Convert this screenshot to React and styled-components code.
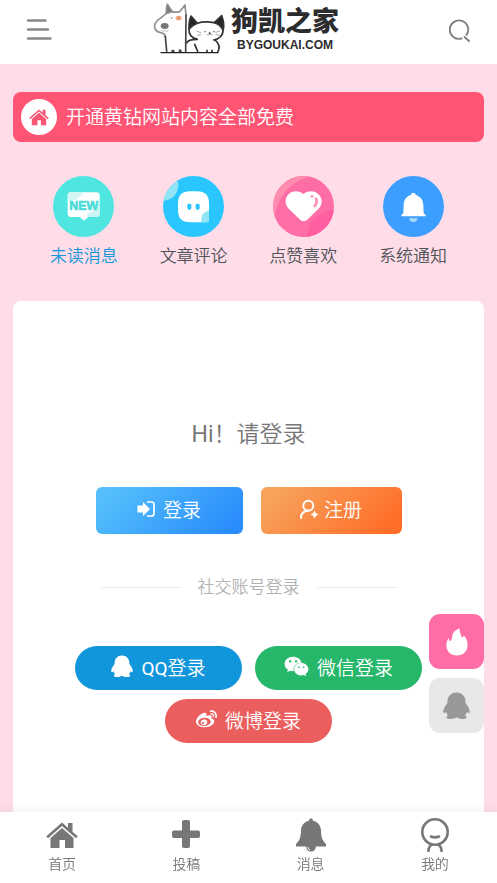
import React from "react";
import styled, { createGlobalStyle } from "styled-components";
import { FaWeibo, FaWeixin } from "react-icons/fa";

const MenuIcon = () => (
	<svg width='30' height='24' viewBox='-2 1 30 24' stroke='#888888' strokeWidth='2.4' strokeLinecap='round'>
		<path d='M4 3.5H21.500M4 12.500H24M4 21.500H26.500' />
	</svg>
);

const SearchIcon = () => (
	<svg width='22' height='24' viewBox='-1 -2 22 24' fill='none' stroke='#808080' strokeWidth='1.9' strokeLinecap='round'>
		<path d='M12.500 18.500A9.200 9.200 0 1 1 17.500 15M15.500 17L20 21' />
	</svg>
);

const LogoPets = () => (
	<svg width='72' height='52' viewBox='10 5 216 156' fill='none' strokeLinecap='round' strokeLinejoin='round'>
		{/* 강아지 */}
		<g stroke='#909090' strokeWidth='5'>
			<path d='M50 39C50 26 51 17 53 12L68 34Z' fill='#777777' />
			<path d='M50 39C42 49 19 57 15 74C13 86 21 94 33 97C43 99 47 104 47 110' />
			<path d='M68 34C78 37 83 36 90 34L106 14L109 44' />
		</g>
		<path d='M109 44L108 154M47 108L51 153M67 154C67 149 71 148 73 154M89 154C89 148 93 148 94 154' stroke='#444444' strokeWidth='5' />
		<ellipse cx='45' cy='77' rx='12' ry='9' fill='#777777' />
		<path d='M36 91Q43 98 45 89Q51 98 56 89' stroke='#999999' strokeWidth='2' />
		<circle cx='66' cy='53' r='2' fill='#555555' />
		<ellipse cx='87' cy='53' rx='7' ry='5' stroke='#f3a070' strokeWidth='4' />
		<circle cx='87' cy='53' r='3' fill='#c06030' />
		{/* 고양이 */}
		<g stroke='#333333' strokeWidth='5'>
			<path d='M118 86C117 67 121 54 124 47L143 69C133 73 124 79 118 86Z' fill='#262626' />
			<path d='M194 67L216 46C222 62 224 78 220 89C213 76 206 70 194 67Z' fill='#262626' />
			<path d='M143 69C158 64 177 64 194 67' />
			<path d='M118 86C117 103 127 113 142 117M220 89C221 105 208 117 192 119M143 117C127 117 114 120 111 128M135 132L144 153M197 120C210 130 211 142 204 156' />
			<path d='M172 155V150M187 155V150' />
		</g>
		<path d='M34 157H204' stroke='#222222' strokeWidth='4' />
		<path d='M142 93L153 97M144 105L153 103M210 92L199 96M211 105L199 103M172 103Q177 107 180 101Q184 107 188 103' stroke='#777777' strokeWidth='2' />
		<g fill='#333333'>
			<circle cx='166' cy='94' r='2' />
			<circle cx='193' cy='94' r='2' />
			<circle cx='180' cy='99' r='3' />
		</g>
	</svg>
);

const HomeIcon = ({ width, height }) => (
	<svg width={width} height={height} viewBox='0 0 32 27' fill='currentColor'>
		<path d='M16 0.500L22 5.800V1H26.500V9.800L31.700 14.300L30 16.200L16 4L2 16.200L0.300 14.300Z' />
		<path d='M16 6L27.500 16V26H19V18H13.500V26H4.500V16Z' />
	</svg>
);

const NewIcon = () => (
	<svg width='61' height='61' viewBox='0 0 183 183'>
		<circle cx='91.500' cy='91.500' r='91.500' fill='#4fe5e1' />
		<path d='M53 49H131Q140 49 140 58V114Q140 123 131 123H106L93 134L80 123H53Q44 123 44 114V58Q44 49 53 49Z' fill='#ffffff' />
		<path d='M53 49H94C84 56 80 69 65 73Q53 76 44 76V58Q44 49 53 49Z' fill='#d3f6f5' />
		<path d='M140 82V114Q140 123 131 123H103C101 107 124 108 125 98C127 90 132 85 140 82Z' fill='#c8f5f3' />
		<text x='92' y='102' textAnchor='middle' fontFamily='Liberation Sans, sans-serif' fontWeight='700' fontSize='37' fill='#4bdcd9' stroke='#4bdcd9' strokeWidth='2' strokeLinejoin='round'>NEW</text>
	</svg>
);

const CommentIcon = () => (
	<svg width='61' height='61' viewBox='0 0 183 183'>
		<clipPath id='commentClip'>
			<circle cx='91.500' cy='91.500' r='91.500' />
		</clipPath>
		<circle cx='91.500' cy='91.500' r='91.500' fill='#29c6ff' />
		<circle cx='0' cy='28' r='46' fill='#90e4f3' clipPath='url(#commentClip)' />
		<path d='M81 46H102Q138 46 138 82V132Q138 139 131 139H81Q45 139 45 103V82Q45 46 81 46Z' fill='#ffffff' />
		<path d='M138 105V132Q138 139 131 139H115C113 119 121 106 138 105Z' fill='#90e4f3' />
		<rect x='73' y='83' width='12' height='18' rx='5' fill='#29c6ff' />
		<rect x='98' y='83' width='12' height='18' rx='5' fill='#29c6ff' />
	</svg>
);

const HeartIcon = () => (
	<svg width='61' height='61' viewBox='0 0 183 183'>
		<clipPath id='heartClip'>
			<circle cx='91.500' cy='91.500' r='91.500' />
		</clipPath>
		<g clipPath='url(#heartClip)'>
			<rect width='183' height='183' fill='#ff6da7' />
			<path d='M0 0H118C65 10 20 50 8 110L0 120Z' fill='#ff8daf' />
			<path d='M183 102C135 108 104 136 102 183H183Z' fill='#ff5fa0' />
		</g>
		<path d='M91 54C77 42 56 43 45 56C34 69 36 87 48 99L82 132Q92 140 102 132L136 99C148 87 150 69 138 56C126 43 106 42 91 54Z' fill='#ffffff' />
		<circle cx='117' cy='61' r='4' fill='#ff8daf' />
		<path d='M129 68Q135 78 125 90' fill='none' stroke='#ff8daf' strokeWidth='8' strokeLinecap='round' />
	</svg>
);

const NoticeIcon = () => (
	<svg width='61' height='61' viewBox='0 0 183 183'>
		<circle cx='91.500' cy='91.500' r='91.500' fill='#3c9eff' />
		<path d='M84 57Q84 50 91 50Q98 50 98 57C113 61 120 72 121 87L122 112L128 117V121H55V117L61 112L62 87C63 72 69 61 84 57Z' fill='#ffffff' />
		<path d='M78 127H104Q102 138 91 138Q80 138 78 127Z' fill='#a9dcf8' />
	</svg>
);

const SignInIcon = () => (
	<svg width='18' height='18' viewBox='0 0 18 18'>
		<path d='M0.500 5.500H6V2L13 9L6 16V12.500H0.500Z' fill='currentColor' />
		<path d='M10 2H14.500Q17 2 17 4.500V13.500Q17 16 14.500 16H10' fill='none' stroke='currentColor' strokeWidth='1.700' />
	</svg>
);

const SignUpIcon = () => (
	<svg width='18' height='20' viewBox='0 0 18 20'>
		<circle cx='8.300' cy='6.700' r='5' fill='none' stroke='currentColor' strokeWidth='1.900' />
		<path d='M1 19C1 15 3.500 12.300 7.500 11.800' fill='none' stroke='currentColor' strokeWidth='2' strokeLinecap='round' />
		<path d='M14.500 12L15.500 14.500L18 15.500L15.500 16.500L14.500 19L13.500 16.500L11 15.500L13.500 14.500Z' fill='currentColor' stroke='currentColor' strokeWidth='0.800' />
	</svg>
);

const PenguinIcon = ({ size }) => (
	<svg width={size} height={size} viewBox='0 0 24 24' fill='currentColor'>
		<path d='M12 0.500C7 0.500 4 4 4 8.700C4 9.500 3.800 10 3.200 10.900C1.600 13 0 15.500 0.300 18C0.500 19.500 1.700 18.800 2.700 17.600C3 19 3.600 20 4.600 20.900C2.500 21.500 2.300 23.800 5.800 23.900C8.500 24 10.500 23.500 12 22.500C13.500 23.500 15.500 24 18.200 23.900C21.700 23.800 21.500 21.500 19.400 20.900C20.400 20 21 19 21.300 17.600C22.300 18.800 23.500 19.500 23.700 18C24 15.500 22.400 13 20.800 10.900C20.200 10 20 9.500 20 8.700C20 4 17 0.500 12 0.500Z' />
	</svg>
);

const FlameIcon = () => (
	<svg width='22' height='28' viewBox='0 0 22 28' fill='currentColor'>
		<path d='M13.300 0.300C14.300 3.500 13.800 5.500 15.600 8.500C16.500 10 17.300 9.500 17.700 7.500C20.500 10 21.700 13.500 21.600 17C21.500 23.500 17 27.500 11 27.500C4.800 27.500 0.400 23.500 0.400 17.500C0.400 14.500 1.300 11.500 2.800 10C3 12.500 3.800 13.500 5 12.500C6.500 11 5.800 8 7 5.500C8.300 3 10.500 2 13.300 0.300Z' />
	</svg>
);

const PlusIcon = () => (
	<svg width='28' height='34' viewBox='0 0 28 34' fill='currentColor'>
		<rect x='10' y='2' width='8' height='28' rx='2' />
		<rect x='0' y='12.500' width='28' height='7.500' rx='2' />
	</svg>
);

const BellIcon = () => (
	<svg width='32' height='34' viewBox='0 0 32 34' fill='currentColor'>
		<path d='M14 2.800Q14 0.300 16 0.300Q18 0.300 18 2.800C23 4 25.500 7.500 26 12C26.200 17 26 21 31 26V28.500H1V26C6 21 5.800 17 6 12C6.500 7.500 9 4 14 2.800Z' />
		<path d='M11 28H21Q20.500 33.500 16 33.500Q11.500 33.500 11 28Z' />
		<path d='M12.800 29Q13.300 31.500 15 31.800' fill='none' stroke='#ffffff' />
	</svg>
);

const MineIcon = () => (
	<svg width='30' height='34' viewBox='0 0 30 34' fill='none' stroke='currentColor' strokeWidth='2.600' strokeLinecap='round'>
		<circle cx='15' cy='14' r='12.700' />
		<path d='M11 18.500Q15 20.300 19 18.500M8.500 33C8.500 30 9.500 28 12 26.700M21.500 33C21.500 30 20.500 28 18 26.700' />
	</svg>
);

const categories = [
	{ name: "未读消息", icon: <NewIcon />, active: true },
	{ name: "文章评论", icon: <CommentIcon /> },
	{ name: "点赞喜欢", icon: <HeartIcon /> },
	{ name: "系统通知", icon: <NoticeIcon /> },
];

const tabs = [
	{ name: "首页", icon: <HomeIcon width='32' height='27' /> },
	{ name: "投稿", icon: <PlusIcon /> },
	{ name: "消息", icon: <BellIcon /> },
	{ name: "我的", icon: <MineIcon /> },
];

const App = () => {
	return (
		<Page>
			<GlobalStyle />
			<Header>
				<IconButton aria-label='菜单'>
					<MenuIcon />
				</IconButton>
				<Logo href='/'>
					<LogoPets />
					<LogoText>
						<LogoName>狗凯之家</LogoName>
						<LogoDomain>BYGOUKAI.COM</LogoDomain>
					</LogoText>
				</Logo>
				<IconButton aria-label='搜索'>
					<SearchIcon />
				</IconButton>
			</Header>
			<Main>
				<Notice href='#vip'>
					<NoticeBadge>
						<HomeIcon width='20' height='17' />
					</NoticeBadge>
					<NoticeText>开通黄钻网站内容全部免费</NoticeText>
				</Notice>
				<CategoryList>
					{categories.map((item) => (
						<CategoryLink key={item.name} href='#message' $active={item.active}>
							{item.icon}
							<span>{item.name}</span>
						</CategoryLink>
					))}
				</CategoryList>
				<Card>
					<Title>
						<Latin>Hi</Latin>！请登录
					</Title>
					<ButtonRow>
						<SignButton $from='#54bffc' $to='#2a8dfc' $width='147px' $gap='8px'>
							<SignInIcon />
							登录
						</SignButton>
						<SignButton $from='#f7a35c' $to='#ff6e28' $width='141px' $gap='6px'>
							<SignUpIcon />
							注册
						</SignButton>
					</ButtonRow>
					<Divider>社交账号登录</Divider>
					<SocialList>
						<SocialButton $color='#1296db'>
							<PenguinIcon size='22' />
							<span>
								<Latin>QQ</Latin>登录
							</span>
						</SocialButton>
						<SocialButton $color='#26b76a'>
							<FaWeixin size='25' />
							微信登录
						</SocialButton>
						<SocialButton $color='#eb5e5e'>
							<FaWeibo size='21' />
							微博登录
						</SocialButton>
					</SocialList>
				</Card>
			</Main>
			<FloatBar>
				<FloatButton aria-label='热门' $color='#ffffff' $background='#ff6da7'>
					<FlameIcon />
				</FloatButton>
				<FloatButton aria-label='QQ' $color='#999798' $background='#e8e8e8'>
					<PenguinIcon size='27' />
				</FloatButton>
			</FloatBar>
			<TabBar>
				{tabs.map((tab) => (
					<TabLink key={tab.name} href='#tab'>
						<TabIcon>{tab.icon}</TabIcon>
						{tab.name}
					</TabLink>
				))}
			</TabBar>
		</Page>
	);
};

export default App;

const GlobalStyle = createGlobalStyle`
	* {
		box-sizing: border-box;
	}
	body {
		margin: 0;
		background: #ffdde8;
		font-family: Roboto, "Noto Sans CJK SC", sans-serif;
		font-weight: 350;
	}
	a {
		color: inherit;
		text-decoration: none;
	}
	button {
		border: 0;
		padding: 0;
		font-family: inherit;
		font-weight: inherit;
		cursor: pointer;
	}
	svg {
		display: block;
		flex-shrink: 0;
	}
`;

const Page = styled.div`
	display: flex;
	flex-direction: column;
	min-height: 100vh;
`;

const Latin = styled.span`
	font-weight: 400;
`;

const Header = styled.header`
	display: grid;
	grid-template-columns: 1fr auto 1fr;
	align-items: center;
	height: 64px;
	padding: 0 27px 0 22px;
	background: #ffffff;
`;

const IconButton = styled.button`
	background: none;
	padding-bottom: 4px;
	&:last-child {
		justify-self: end;
	}
	&:first-child {
		justify-self: start;
	}
`;

const Logo = styled.a`
	display: flex;
	gap: 6px;
	height: 60px;
	color: #2c2c2e;
`;

const LogoText = styled.div`
	display: flex;
	flex-direction: column;
	align-items: center;
	padding-top: 4px;
`;

const LogoName = styled.span`
	font-size: 27px;
	font-weight: 900;
	line-height: 32px;
`;

const LogoDomain = styled.span`
	font-family: "Liberation Sans", sans-serif;
	font-size: 12px;
	font-weight: 700;
	line-height: 14px;
`;

const Main = styled.main`
	flex: 1;
	display: flex;
	flex-direction: column;
	padding: 28px 13px 60px;
`;

const Notice = styled.a`
	display: flex;
	align-items: center;
	gap: 9px;
	height: 50px;
	padding: 0 8px;
	border-radius: 8px;
	background: #ff5474;
	color: #ffffff;
	font-size: 19px;
`;

const NoticeBadge = styled.span`
	display: flex;
	align-items: center;
	justify-content: center;
	width: 36px;
	height: 36px;
	border-radius: 50%;
	background: #ffffff;
	color: #f65574;
`;

const NoticeText = styled.span`
	padding-bottom: 4px;
`;

const CategoryList = styled.nav`
	display: grid;
	grid-template-columns: repeat(4, 1fr);
	margin: 34px 0 35px;
	padding: 0 16px;
`;

const CategoryLink = styled.a`
	display: flex;
	flex-direction: column;
	align-items: center;
	gap: 9px;
	font-size: 17px;
	line-height: 20px;
	color: ${(props) => (props.$active ? "#1296db" : "#4e5358")};
`;

const Card = styled.section`
	flex: 1;
	padding: 119px 20px 80px;
	border-radius: 8px;
	background: #ffffff;
`;

const Title = styled.h1`
	margin: 0 0 37px;
	font-size: 23px;
	font-weight: inherit;
	line-height: 30px;
	text-align: center;
	color: #777777;
`;

const ButtonRow = styled.div`
	display: flex;
	justify-content: center;
	gap: 18px;
`;

const SignButton = styled.button`
	display: flex;
	align-items: center;
	justify-content: center;
	gap: ${(props) => props.$gap};
	width: ${(props) => props.$width};
	height: 47px;
	padding-bottom: 4px;
	border-radius: 6px;
	background: linear-gradient(135deg, ${(props) => props.$from} 10%, ${(props) => props.$to} 90%);
	color: #ffffff;
	font-size: 19px;
`;

const Divider = styled.div`
	display: flex;
	align-items: center;
	justify-content: center;
	gap: 17px;
	margin: 41px 0 47px;
	font-size: 17px;
	line-height: 24px;
	color: #b1b1b1;
	&::before,
	&::after {
		content: "";
		width: 80px;
		height: 1px;
		background: #eeeeee;
	}
`;

const SocialList = styled.div`
	display: flex;
	flex-wrap: wrap;
	justify-content: center;
	gap: 9px 13px;
`;

const SocialButton = styled.button`
	display: flex;
	align-items: center;
	justify-content: center;
	gap: 8px;
	width: 167px;
	height: 44px;
	padding-bottom: 4px;
	border-radius: 22px;
	background: ${(props) => props.$color};
	color: #ffffff;
	font-size: 19px;
`;

const FloatBar = styled.aside`
	position: fixed;
	right: 13px;
	bottom: 150px;
	display: flex;
	flex-direction: column;
	gap: 9px;
`;

const FloatButton = styled.button`
	display: flex;
	align-items: center;
	justify-content: center;
	width: 55px;
	height: 55px;
	border-radius: 11px;
	background: ${(props) => props.$background};
	color: ${(props) => props.$color};
`;

const TabBar = styled.nav`
	position: fixed;
	left: 0;
	right: 0;
	bottom: 0;
	display: grid;
	grid-template-columns: repeat(4, 1fr);
	height: 71px;
	padding-top: 6px;
	background: #ffffff;
	box-shadow: 0 0 12px rgba(0, 0, 0, 0.08);
`;

const TabLink = styled.a`
	display: flex;
	flex-direction: column;
	align-items: center;
	gap: 2px;
	font-size: 14px;
	line-height: 20px;
	color: #777777;
`;

const TabIcon = styled.span`
	display: flex;
	align-items: center;
	height: 34px;
`;
